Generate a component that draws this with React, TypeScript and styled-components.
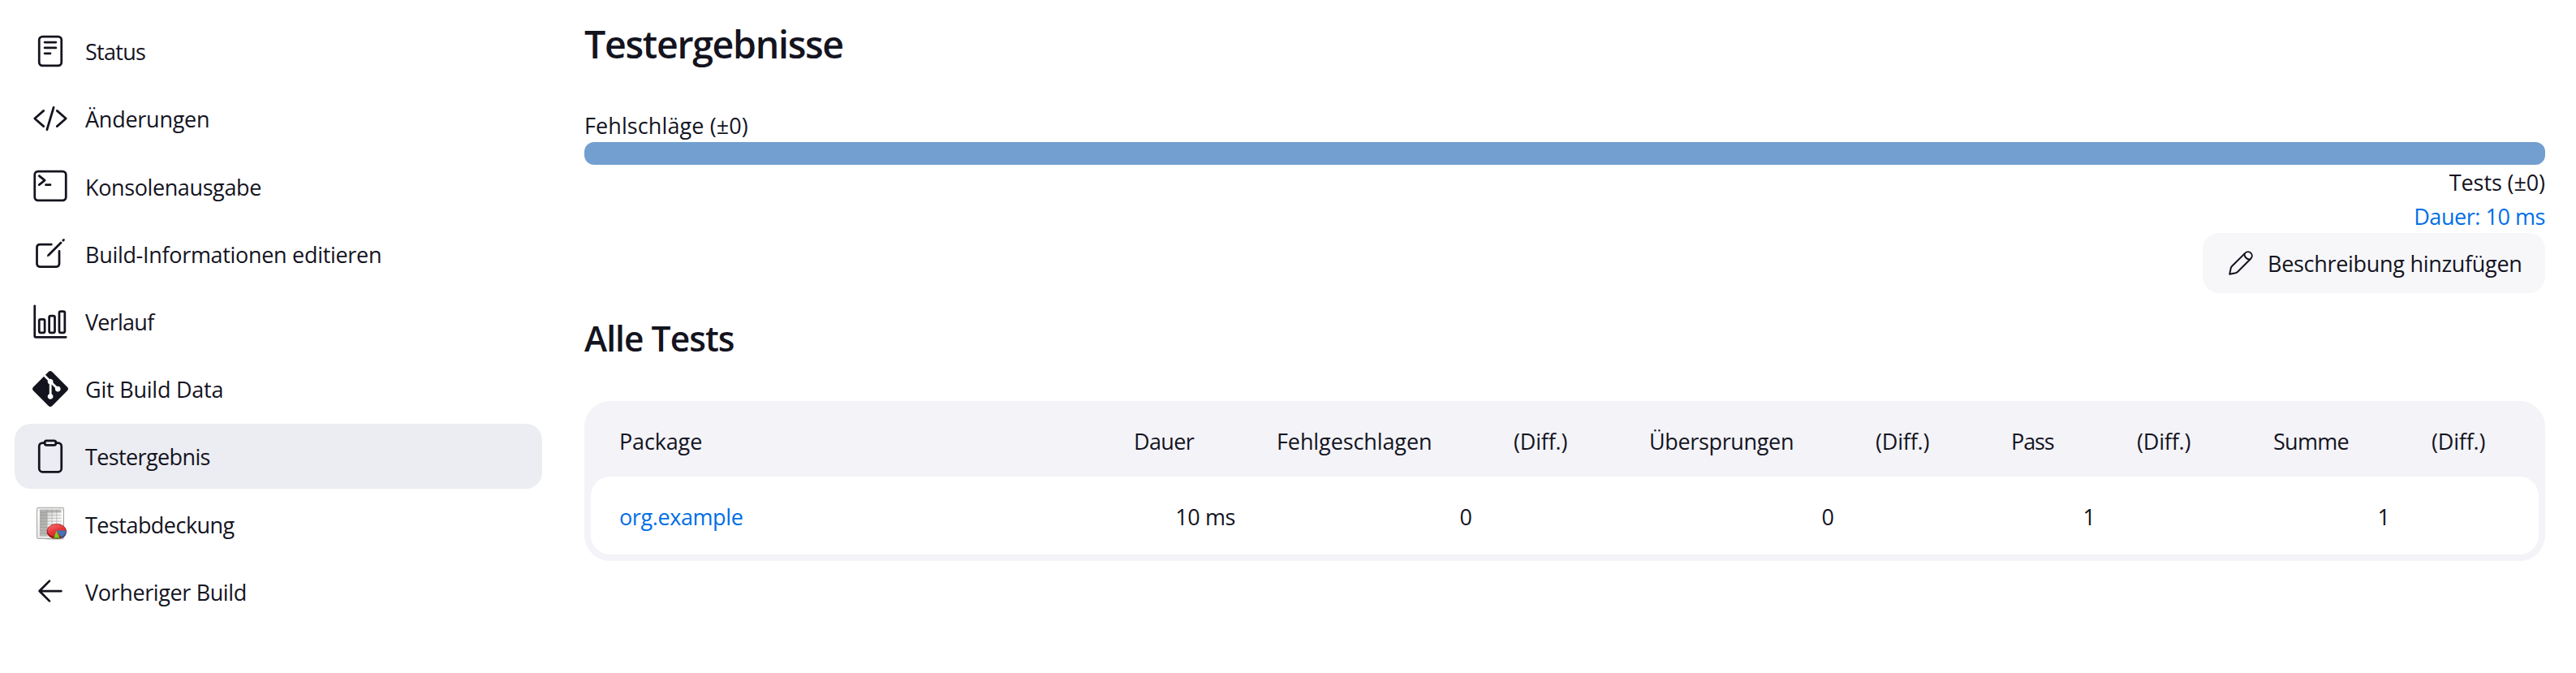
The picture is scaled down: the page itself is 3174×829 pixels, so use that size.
import React from 'react';
import styled, { createGlobalStyle } from 'styled-components';
import { SiGit } from 'react-icons/si';

const ink = '#14141f';
const link = '#006fe6';
const tableGrey = '#f3f3f8';

const GlobalStyle = createGlobalStyle`
  *, *::before, *::after { box-sizing: border-box; }
  body {
    margin: 0;
    background: #fff;
    color: ${ink};
    font-family: 'Open Sans', 'Noto Sans', sans-serif;
    font-size: 27px;
    line-height: 42px;
  }
`;

const Page = styled.div`
  display: grid;
  grid-template-columns: 650px 2416px;
  column-gap: 52px;
  padding-left: 18px;
  min-height: 829px;
  align-items: start;
`;

const SideNav = styled.nav`
  display: flex;
  flex-direction: column;
  gap: 3.2px;
  padding-top: 22.8px;
`;

const NavItem = styled.a<{ $active?: boolean }>`
  display: flex;
  align-items: center;
  gap: 21px;
  height: 80px;
  padding-left: 22px;
  border-radius: 20px;
  background: ${(p) => (p.$active ? '#ecedf2' : 'transparent')};
  color: inherit;
  text-decoration: none;

  span { padding-top: 3px; }
`;

const Label = styled.span<{ $track?: number }>`
  letter-spacing: ${(p) => p.$track ?? 0}px;
  white-space: nowrap;
`;

const MenuIcon = styled.svg`
  flex: none;
  width: 44px;
  height: 44px;
`;

const GitIcon = styled(SiGit)`
  flex: none;
  width: 44px;
  height: 44px;
`;

const Main = styled.main`
  display: flex;
  flex-direction: column;
  padding-top: 21px;
`;

const Title = styled.h1`
  margin: 0 0 46px;
  font-size: 46.5px;
  line-height: 66px;
  font-weight: 600;
  letter-spacing: -1.3px;
`;

const SectionTitle = styled.h2`
  margin: 25px 0 47px;
  font-size: 42.5px;
  line-height: 61px;
  font-weight: 600;
  letter-spacing: -0.95px;
`;

const SummaryLine = styled.div<{ $end?: boolean }>`
  display: flex;
  justify-content: ${(p) => (p.$end ? 'flex-end' : 'flex-start')};
  height: 42px;
  line-height: 43px;
`;

const ResultBar = styled.div`
  height: 28px;
  border-radius: 12px;
  background: #729fcf;
`;

const Link = styled.a`
  color: ${link};
  text-decoration: none;
`;

const EditButton = styled.button`
  display: flex;
  align-items: center;
  align-self: flex-end;
  gap: 18px;
  width: 422px;
  height: 74px;
  padding: 0 0 0 32px;
  border: 0;
  border-radius: 20px;
  background: #f7f7fa;
  color: inherit;
  font: inherit;

  span { padding-top: 2px; }
`;

const PencilIcon = styled.svg`
  flex: none;
  width: 30px;
  height: 30px;
`;

const ResultTable = styled.div`
  border: 8px solid ${tableGrey};
  border-radius: 32px;
  background: #fff;
  background-clip: padding-box;
`;

const columns = '635px 176px 292px 167px 279px 167px 155px 168px 195px 166px';

const HeaderRow = styled.div`
  display: grid;
  grid-template-columns: ${columns};
  align-items: center;
  height: 85px;
  padding-bottom: 2px;
  border-radius: 24px 24px 0 0;
  background: ${tableGrey};
`;

const TableBody = styled.div`
  border-radius: 0 0 24px 24px;
  background: ${tableGrey};
`;

const Row = styled.div`
  display: grid;
  grid-template-columns: ${columns};
  align-items: center;
  height: 96px;
  padding-top: 3px;
  border-radius: 24px;
  background: #fff;
`;

const Cell = styled.div<{ $numeric?: boolean }>`
  padding: 0 17px 0 34px;
  text-align: ${(p) => (p.$numeric ? 'right' : 'left')};
  white-space: nowrap;

  &:first-child { padding-left: 35px; }
`;

function Outline({ children }: { children: React.ReactNode }) {
  return (
    <MenuIcon
      viewBox="0 0 512 512"
      fill="none"
      stroke="currentColor"
      strokeWidth="32"
      strokeLinecap="round"
      strokeLinejoin="round"
    >
      {children}
    </MenuIcon>
  );
}

function CoverageIcon() {
  return (
    <MenuIcon viewBox="0 0 44 44">
      <defs>
        <linearGradient id="paper" x1="0" y1="0" x2="0" y2="1">
          <stop offset="0" stopColor="#e4e4e2" />
          <stop offset="0.15" stopColor="#fbfbfb" />
          <stop offset="1" stopColor="#e6e6e6" />
        </linearGradient>
        <linearGradient id="cells" x1="0" y1="0" x2="1" y2="1">
          <stop offset="0" stopColor="#c4c4c2" />
          <stop offset="0.5" stopColor="#f1f1f0" />
          <stop offset="1" stopColor="#ffffff" />
        </linearGradient>
        <linearGradient id="pie" x1="0" y1="0" x2="0.6" y2="1">
          <stop offset="0" stopColor="#ff7474" />
          <stop offset="0.55" stopColor="#e53a3c" />
          <stop offset="1" stopColor="#c81a1e" />
        </linearGradient>
      </defs>
      <ellipse cx="27" cy="40.7" rx="12" ry="1.6" fill="#000" opacity="0.16" />
      <rect x="5.5" y="2.3" width="33" height="38.2" rx="1.6" fill="url(#paper)" stroke="#a4a4a2" />
      <rect x="9" y="4.8" width="26.3" height="32.8" fill="url(#cells)" />
      <rect x="9" y="4.8" width="26.3" height="3.2" fill="#aaaaa8" opacity="0.75" />
      <rect x="9" y="8" width="9" height="29.6" fill="#a2a2a0" opacity="0.72" />
      <path
        d="M9 8h26.3M9 11.7h26.3M9 15.4h26.3M9 19.1h26.3M9 22.8h26.3M9 26.5h26.3M9 30.2h26.3M9 33.9h26.3M18.2 4.8v32.8M24 4.8v32.8M29.8 4.8v32.8"
        stroke="#8e8e8c"
        strokeWidth="0.65"
        opacity="0.75"
      />
      <ellipse cx="29.8" cy="32.2" rx="12" ry="8.6" fill="#8f1014" />
      <ellipse cx="29.8" cy="30.7" rx="11.6" ry="8.2" fill="url(#pie)" stroke="#a41216" strokeWidth="0.7" />
      <path d="M29.3 30.4H41.4C41.5 34.3 38.8 37.2 35.2 38.6Z" fill="#4572b4" />
      <path d="M35.2 38.6c3.6-1 6.2-3.8 6.2-7v1.8c0 3.2-2.6 5.6-5.6 6.6Z" fill="#274b80" />
      <path d="M29.3 30.8L33.6 39.6C31.4 40.4 28.8 40.5 26.4 39.9Z" fill="#79d020" />
      <path d="M26.5 38.6c2.2.5 4.7.4 6.7-.1l.4 1.1c-2.2.8-4.8.9-7.2.3Z" fill="#4f9c0c" />
    </MenuIcon>
  );
}

const navItems: { text: string; track: number; icon: React.ReactNode; active?: boolean }[] = [
  {
    text: 'Status',
    track: -0.7,
    icon: (
      <Outline>
        <rect x="96" y="48" width="320" height="416" rx="48" />
        <path d="M176 128h160M176 208h160M176 288h80" />
      </Outline>
    ),
  },
  {
    text: 'Änderungen',
    track: -0.25,
    icon: (
      <Outline>
        <path d="M160 368L32 256l128-112M352 368l128-112-128-112M304 96l-96 320" />
      </Outline>
    ),
  },
  {
    text: 'Konsolenausgabe',
    track: -0.39,
    icon: (
      <Outline>
        <rect x="32" y="48" width="448" height="416" rx="48" />
        <path d="M96 112l80 64-80 64M192 240h64" />
      </Outline>
    ),
  },
  {
    text: 'Build-Informationen editieren',
    track: -0.31,
    icon: (
      <Outline>
        <path d="M384 224v184a40 40 0 01-40 40H104a40 40 0 01-40-40V168a40 40 0 0140-40h167.48" />
        <path
          fill="currentColor"
          stroke="none"
          d="M459.94 53.25a16.06 16.06 0 00-23.22-.56L424.35 65a8 8 0 000 11.31l11.34 11.32a8 8 0 0011.34 0l12.06-12c6.1-6.09 6.67-16.01.85-22.38zM399.34 90L218.82 270.2a9 9 0 00-2.31 3.93L208.16 299a3.91 3.91 0 004.86 4.86l24.85-8.35a9 9 0 003.93-2.31L422 112.66a9 9 0 000-12.66l-9.95-10a9 9 0 00-12.71 0z"
        />
      </Outline>
    ),
  },
  {
    text: 'Verlauf',
    track: -0.75,
    icon: (
      <Outline>
        <path d="M32 32v432a16 16 0 0016 16h432" />
        <rect x="96" y="224" width="80" height="192" rx="20" />
        <rect x="240" y="176" width="80" height="240" rx="20" />
        <rect x="383.64" y="112" width="80" height="304" rx="20" />
      </Outline>
    ),
  },
  { text: 'Git Build Data', track: -0.23, icon: <GitIcon /> },
  {
    text: 'Testergebnis',
    track: -0.62,
    active: true,
    icon: (
      <Outline>
        <path d="M336 64h32a48 48 0 0148 48v320a48 48 0 01-48 48H144a48 48 0 01-48-48V112a48 48 0 0148-48h32" />
        <rect x="176" y="32" width="160" height="64" rx="26.13" />
      </Outline>
    ),
  },
  { text: 'Testabdeckung', track: -0.53, icon: <CoverageIcon /> },
  {
    text: 'Vorheriger Build',
    track: -0.38,
    icon: (
      <Outline>
        <path d="M244 400L100 256l144-144M120 256h292" />
      </Outline>
    ),
  },
];

const headers: [string, number][] = [
  ['Package', -0.15],
  ['Dauer', -0.65],
  ['Fehlgeschlagen', -0.1],
  ['(Diff.)', -0.2],
  ['Übersprungen', -0.35],
  ['(Diff.)', -0.2],
  ['Pass', -1.1],
  ['(Diff.)', -0.2],
  ['Summe', -0.7],
  ['(Diff.)', -0.2],
];

const values = ['10 ms', '0', '', '0', '', '1', '', '1', ''];

export default function App() {
  return (
    <>
      <GlobalStyle />
      <Page>
        <SideNav>
          {navItems.map((item) => (
            <NavItem key={item.text} $active={item.active}>
              {item.icon}
              <Label $track={item.track}>{item.text}</Label>
            </NavItem>
          ))}
        </SideNav>
        <Main>
          <Title>Testergebnisse</Title>
          <SummaryLine>
            <Label $track={0.1}>Fehlschläge (±0)</Label>
          </SummaryLine>
          <ResultBar />
          <SummaryLine $end>
            <Label $track={-0.1}>Tests (±0)</Label>
          </SummaryLine>
          <SummaryLine $end>
            <Link>
              <Label $track={-0.45}>Dauer: 10 ms</Label>
            </Link>
          </SummaryLine>
          <EditButton>
            <PencilIcon
              viewBox="0 0 30 30"
              fill="none"
              stroke="currentColor"
              strokeWidth="2"
              strokeLinecap="round"
              strokeLinejoin="round"
            >
              <path d="M1.2 28.8L2.7 21.4Q3.1 19.9 4.2 18.8L20.5 2.6a4.88 4.88 0 0 1 6.9 6.9L11.2 25.8Q10.1 26.9 8.6 27.3Z" />
              <path d="M19.3 3.9Q19.9 9.9 26 10.8" />
            </PencilIcon>
            <Label $track={-0.3}>Beschreibung hinzufügen</Label>
          </EditButton>
          <SectionTitle>Alle Tests</SectionTitle>
          <ResultTable>
            <HeaderRow>
              {headers.map(([text, track], i) => (
                <Cell key={i}>
                  <Label $track={track}>{text}</Label>
                </Cell>
              ))}
            </HeaderRow>
            <TableBody>
              <Row>
                <Cell>
                  <Link>
                    <Label $track={-0.4}>org.example</Label>
                  </Link>
                </Cell>
                {values.map((value, i) => (
                  <Cell key={i} $numeric>
                    <Label $track={value.length > 1 ? -0.4 : 0}>{value}</Label>
                  </Cell>
                ))}
              </Row>
            </TableBody>
          </ResultTable>
        </Main>
      </Page>
    </>
  );
}
